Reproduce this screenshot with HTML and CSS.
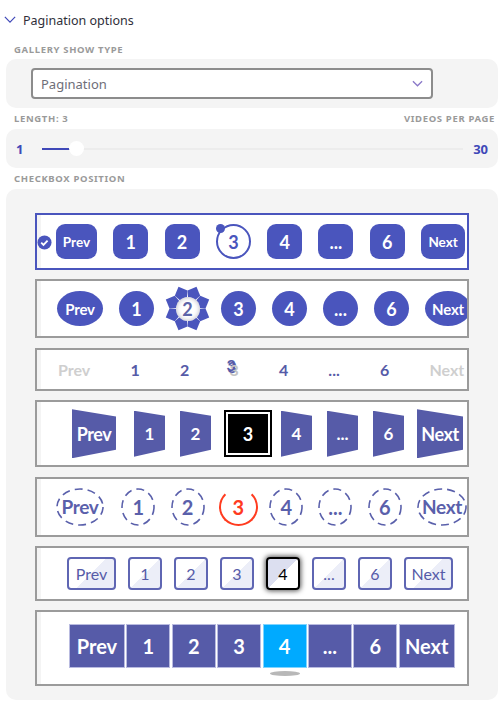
FILE: index.html
```html
<!DOCTYPE html>
<html lang="en">
<head>
    <meta charset="UTF-8">
    <title>Pagination options</title>
    <link rel="stylesheet" href="styles.css">
</head>
<body>
    <div class="section-title">
        <svg class="title-chevron" viewBox="0 0 14 8"><path d="M1 1l6 6 6-6"/></svg>
        <span>Pagination options</span>
    </div>

    <div class="field-label label-first">Gallery show type</div>
    <div class="panel panel-select">
        <div class="select">
            <span>Pagination</span>
            <svg class="select-chevron" viewBox="0 0 12 7"><path d="M1 1l5 5 5-5"/></svg>
        </div>
    </div>

    <div class="field-label label-split"><span>Length: 3</span><span>Videos per page</span></div>
    <div class="panel panel-slider">
        <span class="slider-end">1</span>
        <div class="slider-track">
            <div class="slider-fill"></div>
            <div class="slider-thumb"></div>
        </div>
        <span class="slider-end">30</span>
    </div>

    <div class="field-label">Checkbox position</div>
    <div class="panel panel-styles">
        <div class="pager pager-rounded selected">
            <svg class="check-badge" viewBox="0 0 16 16"><circle cx="8" cy="8" r="7.5"/><path d="M4.5 8.2l2.4 2.3 4.4-4.5"/></svg>
            <a class="page wide">Prev</a>
            <a class="page">1</a>
            <a class="page">2</a>
            <a class="page active">3<i class="ring-dot"></i></a>
            <a class="page">4</a>
            <a class="page">...</a>
            <a class="page">6</a>
            <a class="page wide next">Next</a>
        </div>

        <div class="pager pager-oval">
            <a class="page wide">Prev</a>
            <a class="page">1</a>
            <a class="page active">
                <svg class="flower" viewBox="-24 -24 48 48">
                    <path d="M-3.5 -10 L-7 -17 L0 -24 L7 -17 L3.5 -10 Z" transform="rotate(22.5)"/>
                    <path d="M-3.5 -10 L-7 -17 L0 -24 L7 -17 L3.5 -10 Z" transform="rotate(67.5)"/>
                    <path d="M-3.5 -10 L-7 -17 L0 -24 L7 -17 L3.5 -10 Z" transform="rotate(112.5)"/>
                    <path d="M-3.5 -10 L-7 -17 L0 -24 L7 -17 L3.5 -10 Z" transform="rotate(157.5)"/>
                    <path d="M-3.5 -10 L-7 -17 L0 -24 L7 -17 L3.5 -10 Z" transform="rotate(202.5)"/>
                    <path d="M-3.5 -10 L-7 -17 L0 -24 L7 -17 L3.5 -10 Z" transform="rotate(247.5)"/>
                    <path d="M-3.5 -10 L-7 -17 L0 -24 L7 -17 L3.5 -10 Z" transform="rotate(292.5)"/>
                    <path d="M-3.5 -10 L-7 -17 L0 -24 L7 -17 L3.5 -10 Z" transform="rotate(337.5)"/>
                </svg>
                <span class="flower-num">2</span>
            </a>
            <a class="page">3</a>
            <a class="page">4</a>
            <a class="page">...</a>
            <a class="page">6</a>
            <a class="page wide next">Next</a>
        </div>

        <div class="pager pager-plain">
            <a class="page muted">Prev</a>
            <a class="page">1</a>
            <a class="page">2</a>
            <a class="page active">3</a>
            <a class="page">4</a>
            <a class="page">...</a>
            <a class="page">6</a>
            <a class="page muted">Next</a>
        </div>

        <div class="pager pager-skew">
            <a class="page wide prev">Prev</a>
            <a class="page">1</a>
            <a class="page">2</a>
            <a class="page active">3</a>
            <a class="page">4</a>
            <a class="page">...</a>
            <a class="page">6</a>
            <a class="page wide next">Next</a>
        </div>

        <div class="pager pager-dashed">
            <a class="page wide prev"><svg class="dash-ring" viewBox="0 0 48 38" preserveAspectRatio="none"><ellipse cx="24" cy="19" rx="23" ry="18"/></svg>Prev</a>
            <a class="page"><svg class="dash-ring" viewBox="0 0 34 38" preserveAspectRatio="none"><ellipse cx="17" cy="19" rx="16" ry="18"/></svg>1</a>
            <a class="page"><svg class="dash-ring" viewBox="0 0 34 38" preserveAspectRatio="none"><ellipse cx="17" cy="19" rx="16" ry="18"/></svg>2</a>
            <a class="page active">3</a>
            <a class="page"><svg class="dash-ring" viewBox="0 0 34 38" preserveAspectRatio="none"><ellipse cx="17" cy="19" rx="16" ry="18"/></svg>4</a>
            <a class="page"><svg class="dash-ring" viewBox="0 0 34 38" preserveAspectRatio="none"><ellipse cx="17" cy="19" rx="16" ry="18"/></svg>...</a>
            <a class="page"><svg class="dash-ring" viewBox="0 0 34 38" preserveAspectRatio="none"><ellipse cx="17" cy="19" rx="16" ry="18"/></svg>6</a>
            <a class="page wide next"><svg class="dash-ring" viewBox="0 0 50 38" preserveAspectRatio="none"><ellipse cx="25" cy="19" rx="24" ry="18"/></svg>Next</a>
        </div>

        <div class="pager pager-split">
            <a class="page wide">Prev</a>
            <a class="page">1</a>
            <a class="page">2</a>
            <a class="page">3</a>
            <a class="page active">4</a>
            <a class="page">...</a>
            <a class="page">6</a>
            <a class="page wide">Next</a>
        </div>

        <div class="pager pager-blocks">
            <a class="page wide">Prev</a>
            <a class="page">1</a>
            <a class="page">2</a>
            <a class="page">3</a>
            <a class="page active">4</a>
            <a class="page">...</a>
            <a class="page">6</a>
            <a class="page wide">Next</a>
        </div>
    </div>
</body>
</html>
```

FILE: styles.css
```css
* {
    margin: 0;
    padding: 0;
    box-sizing: border-box;
}

html, body {
    height: 703px;
    overflow: hidden;
}

body {
    font-family: "Noto Sans", "Open Sans", sans-serif;
    background: #fff;
    padding: 0 6px;
    color: #333;
}

.section-title {
    display: flex;
    align-items: center;
    height: 41px;
    margin-left: -2px;
    font-size: 12.5px;
    color: #2f2f3a;
}

.title-chevron {
    width: 12px;
    height: 7px;
    margin: -3px 7px 0 0;
    fill: none;
    stroke: #3f48b8;
    stroke-width: 1.4;
}

.field-label {
    height: 21px;
    padding: 5px 8px 0;
    font-size: 9.5px;
    line-height: 12px;
    font-weight: 700;
    letter-spacing: 0.65px;
    text-transform: uppercase;
    color: #9a9a9a;
}

.label-first {
    height: 18px;
    padding-top: 3px;
}

.label-split {
    display: flex;
    justify-content: space-between;
    padding-right: 3px;
}

.panel {
    background: #f4f4f4;
    border-radius: 10px;
}

.panel-select {
    height: 49px;
    padding: 9px 25px;
}

.select {
    display: flex;
    align-items: center;
    justify-content: space-between;
    width: 402px;
    height: 31px;
    padding: 0 8px;
    background: #fff;
    border: 2px solid #8c8c8c;
    border-radius: 4px;
    font-size: 13px;
    color: #6e6e78;
}

.select-chevron {
    width: 11px;
    height: 7px;
    fill: none;
    stroke: #8a78c8;
    stroke-width: 1.4;
}

.panel-slider {
    display: flex;
    align-items: center;
    height: 39px;
    padding: 1px 10px 0;
}

.slider-end {
    font-size: 13px;
    font-weight: 700;
    color: #3f48b8;
}

.slider-track {
    position: relative;
    flex: 1;
    height: 2px;
    margin: 0 10px 0 19px;
    background: #ececec;
}

.slider-fill {
    width: 28px;
    height: 2px;
    background: #3f48b8;
}

.slider-thumb {
    position: absolute;
    left: 27px;
    top: -7px;
    width: 15px;
    height: 15px;
    border-radius: 50%;
    background: #fff;
}

.panel-styles {
    height: 511px;
    padding: 24px 29px 14px;
}

/* one row per pagination style */
.pager {
    position: relative;
    display: flex;
    align-items: center;
    width: 434px;
    margin-bottom: 9.4px;
    background: #fff;
    border: 2px solid #9b9b9b;
    box-shadow: inset 4px 0 0 #f4f4f4;
    overflow: hidden;
    font-family: Lato, "Noto Sans", sans-serif;
}

.pager.selected {
    border-color: #4a55bd;
    overflow: visible;
}

.page {
    position: relative;
    display: flex;
    align-items: center;
    justify-content: center;
    flex: none;
    font-weight: 700;
}

/* style 1: rounded squares */
.pager-rounded {
    height: 57px;
    padding-left: 19px;
    gap: 16.3px;
}

.pager-rounded .page {
    width: 35px;
    height: 35px;
    border-radius: 9px;
    background: #4a55bd;
    color: #fff;
    font-size: 18px;
}

.pager-rounded .wide {
    width: 41px;
    font-size: 13.5px;
}

.pager-rounded .next {
    width: 44px;
}

.pager-rounded .active {
    background: #fff;
    border: 2px solid #4a55bd;
    border-radius: 50%;
    color: #4a55bd;
}

.ring-dot {
    position: absolute;
    left: -2px;
    top: -2px;
    width: 9px;
    height: 9px;
    border-radius: 50%;
    background: #4a55bd;
}

.check-badge {
    position: absolute;
    left: 0;
    top: 20px;
    width: 15px;
    height: 15px;
}

.check-badge circle {
    fill: #4a55bd;
}

.check-badge path {
    fill: none;
    stroke: #fff;
    stroke-width: 2;
}

/* style 2: ovals */
.pager-oval {
    height: 59px;
    padding-left: 20px;
    gap: 16px;
}

.pager-oval .page {
    width: 35px;
    height: 35px;
    border-radius: 50%;
    background: #4a55bd;
    color: #fff;
    font-size: 18px;
}

.pager-oval .wide {
    width: 46px;
    font-size: 15px;
    letter-spacing: -0.2px;
}

.pager-oval .active {
    background: none;
}

.flower {
    position: absolute;
    left: -6px;
    top: -6px;
    width: 47px;
    height: 47px;
    fill: #4a55bd;
}

.flower-num {
    position: relative;
    display: flex;
    align-items: center;
    justify-content: center;
    width: 24px;
    height: 24px;
    border-radius: 50%;
    background: #fff;
    color: #5d64a8;
    box-shadow: 0 0 5px #b5b5c0 inset;
}

/* style 3: text only */
.pager-plain {
    height: 43px;
    padding-left: 21px;
    gap: 40.2px;
}

.pager-plain .page {
    font-size: 16px;
    color: #565ba8;
}

.pager-plain .muted {
    color: #cfcfcf;
}

.pager-plain .active {
    color: #c4c4c4;
    text-shadow: -2px -3px 0 #565ba8, -3px -5px 0 #565ba8;
}

/* style 4: trapezoids */
.pager-skew {
    height: 67px;
    padding-left: 35px;
    gap: 15px;
}

.pager-skew .page {
    width: 31px;
    height: 46px;
    background: #565ba8;
    color: #fff;
    font-size: 17px;
    clip-path: polygon(0 0, 100% 11%, 100% 85%, 0 100%);
}

.pager-skew .wide {
    width: 44px;
    height: 49px;
    font-size: 18px;
    letter-spacing: -0.4px;
    clip-path: polygon(0 0, 100% 15%, 100% 83%, 0 100%);
}

.pager-skew .prev {
    margin-right: 3px;
}

.pager-skew .next {
    width: 46px;
    margin-left: -2px;
}

.pager-skew .active {
    width: 48px;
    height: 47px;
    margin: 0 -6px 0 -2px;
    background: #000;
    border: 2px solid #000;
    box-shadow: inset 0 0 0 2px #fff;
    font-size: 18px;
    clip-path: none;
}

/* style 5: dashed ovals */
.pager-dashed {
    height: 60px;
    padding-left: 19px;
    gap: 15.3px;
}

.pager-dashed .page {
    width: 34px;
    height: 38px;
    color: #5a60ab;
    font-size: 20px;
}

.dash-ring {
    position: absolute;
    inset: 0;
    width: 100%;
    height: 100%;
    fill: none;
    stroke: #5a60ab;
    stroke-width: 1.6;
    stroke-dasharray: 8 5;
}

.pager-dashed .wide {
    width: 48px;
    font-size: 19px;
    letter-spacing: -0.3px;
}

.pager-dashed .prev {
    margin-right: 2px;
}

.pager-dashed .next {
    width: 50px;
}

.pager-dashed .active {
    width: 39px;
    margin: 0 -4px 0 -1px;
    border: 2px solid #ff3b1f;
    border-top-color: transparent;
    border-radius: 50%;
    color: #ff3b1f;
}

/* style 6: split gradient buttons */
.pager-split {
    height: 55px;
    padding-left: 30px;
    gap: 12px;
}

.pager-split .page {
    width: 34px;
    height: 33px;
    background: linear-gradient(135deg, #fff 50%, #eceef8 50%);
    border: 2px solid #5f66b3;
    border-radius: 4px;
    color: #565ba8;
    font-size: 16px;
    font-weight: 400;
}

.pager-split .wide {
    width: 49px;
}

.pager-split .active {
    background: linear-gradient(135deg, #dcdff0 50%, #fff 50%);
    border-color: #000;
    color: #000;
    box-shadow: 0 0 5px 1px #555;
}

/* style 7: joined blocks */
.pager-blocks {
    height: 76px;
    margin-bottom: 0;
    padding: 0 0 0 32px;
    gap: 1.4px;
}

.pager-blocks .page {
    width: 44px;
    height: 44px;
    margin-bottom: 5px;
    background: #565ba8;
    border: 1px solid #b9bbe0;
    color: #fff;
    font-size: 20px;
}

.pager-blocks .wide {
    width: 56px;
}

.pager-blocks .active {
    background: #00aaff;
    border-color: #7fd4ff;
}

.pager-blocks .active::after {
    content: "";
    position: absolute;
    left: 6px;
    right: 6px;
    bottom: -9px;
    height: 5px;
    border-radius: 50%;
    background: #b8b8b8;
}
```
